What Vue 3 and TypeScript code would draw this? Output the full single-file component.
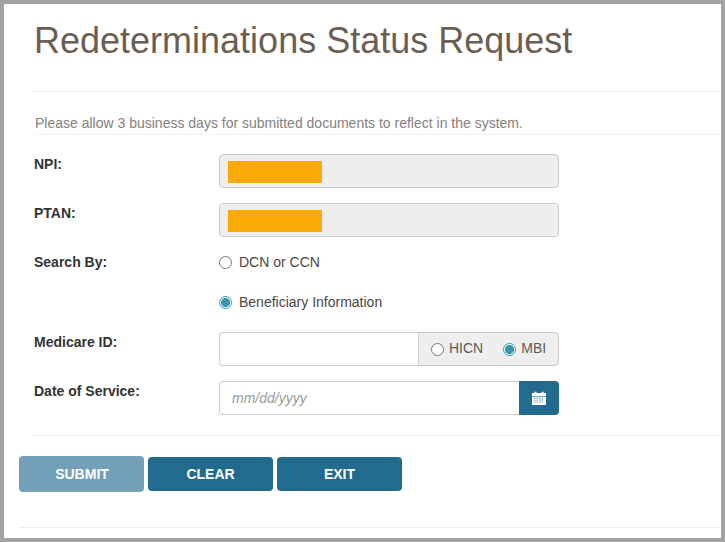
<script setup lang="ts">
const dots: { x: number; y: number }[] = []
for (const y of [6.5, 8.5, 10.5]) {
  for (const x of [2, 4.5, 7, 9.5]) dots.push({ x, y })
}
</script>

<template>
  <div class="frame">
    <h1 class="title">Redeterminations Status Request</h1>
    <hr class="rule first" />
    <p class="note">Please allow 3 business days for submitted documents to reflect in the system.</p>
    <hr class="rule second" />
    <form class="form" @submit.prevent>
      <div class="row">
        <label class="label">NPI:</label>
        <div class="readonly"><span class="redact"></span></div>
      </div>
      <div class="row">
        <label class="label">PTAN:</label>
        <div class="readonly"><span class="redact"></span></div>
      </div>
      <div class="row radio-row">
        <label class="label">Search By:</label>
        <label class="choice"><input class="radio" type="radio" name="by" />DCN or CCN</label>
      </div>
      <div class="row radio-row second-radio">
        <span class="label"></span>
        <label class="choice"><input class="radio" type="radio" name="by" checked />Beneficiary Information</label>
      </div>
      <div class="row">
        <label class="label">Medicare ID:</label>
        <div class="group">
          <input class="field" type="text" />
          <div class="addon">
            <label class="mini"><input class="radio" type="radio" name="idt" />HICN</label>
            <label class="mini"><input class="radio" type="radio" name="idt" checked />MBI</label>
          </div>
        </div>
      </div>
      <div class="row">
        <label class="label">Date of Service:</label>
        <div class="group">
          <input class="field date" type="text" placeholder="mm/dd/yyyy" />
          <button class="cal" type="button" aria-label="Open calendar">
            <svg width="14" height="14" viewBox="0 0 14 14">
              <path d="M0 2h2.5V0.8h2V2h5V0.8h2V2H14v3H0z" fill="#fff" />
              <path d="M0 5.6h14V14H0z" fill="#fff" />
              <rect v-for="(d, i) in dots" :key="i" :x="d.x" :y="d.y" width="1.6" height="1.2" fill="#8aa8c0" />
            </svg>
          </button>
        </div>
      </div>
    </form>
    <hr class="rule third" />
    <div class="actions">
      <button class="btn disabled" type="button">SUBMIT</button>
      <button class="btn" type="button">CLEAR</button>
      <button class="btn" type="button">EXIT</button>
    </div>
    <hr class="rule last" />
  </div>
</template>

<style>
html, body { margin: 0; padding: 0; background: #fff; }
</style>

<style scoped>
.frame {
  box-sizing: border-box;
  width: 725px;
  height: 542px;
  border: 4px solid #a3a3a3;
  background: #fff;
  overflow: hidden;
  font-family: "Liberation Sans", Arial, sans-serif;
  font-size: 14px;
  color: #333;
}
.title {
  margin: 14px 0 0 30px;
  font-size: 36px;
  line-height: 45px;
  font-weight: 400;
  color: #6b5e52;
}
.rule {
  border: 0;
  border-top: 1px solid #eee;
  margin: 0;
}
.first { margin: 28px 0 0 30px; }
.note {
  margin: 21px 0 0 31px;
  font-size: 14px;
  line-height: 20px;
  color: #85807c;
}
.second { margin: 1px 0 0 30px; border-color: #f3f3f3; }
.form {
  display: flex;
  flex-direction: column;
  gap: 15px;
  margin: 19px 0 0 30px;
}
.row {
  display: flex;
  align-items: flex-start;
}
.label {
  width: 185px;
  flex: none;
  font-weight: 700;
  line-height: 20px;
  color: #333;
}
.readonly {
  box-sizing: border-box;
  width: 340px;
  height: 34px;
  display: flex;
  align-items: center;
  padding: 2px 0 0 8px;
  background: #eee;
  border: 1px solid #ccc;
  border-radius: 4px;
}
.redact {
  width: 94px;
  height: 22px;
  background: #f9aa06;
}
.radio-row { margin-top: -7px; height: 34px; align-items: center; }
.radio-row .label { align-self: center; }
.second-radio { margin-top: -7px; height: 30px; }
.choice {
  display: flex;
  align-items: center;
  line-height: 20px;
  color: #4a4644;
}
.radio {
  appearance: none;
  box-sizing: border-box;
  width: 13px;
  height: 13px;
  margin: 0 7px 0 0;
  border: 1px solid #777;
  border-radius: 50%;
  background: #fff;
  flex: none;
}
.radio:checked {
  border-color: #3a94ad;
  background: radial-gradient(circle, #3a94ad 0 4.2px, #fff 4.8px);
}
.group {
  width: 340px;
  height: 34px;
  display: flex;
}
.field {
  box-sizing: border-box;
  flex: 1;
  min-width: 0;
  height: 34px;
  border: 1px solid #ccc;
  border-right: 0;
  border-radius: 4px 0 0 4px;
  outline: 0;
  padding: 0 12px;
  font: inherit;
  background: #fff;
}
.date::placeholder { color: #999; font-style: italic; opacity: 1; }
.date { font-style: italic; }
.addon {
  box-sizing: border-box;
  width: 141px;
  flex: none;
  display: flex;
  align-items: center;
  gap: 20px;
  padding-left: 12px;
  background: #eee;
  border: 1px solid #ccc;
  border-radius: 0 4px 4px 0;
}
.mini {
  display: flex;
  align-items: center;
  padding-bottom: 2px;
  color: #5c5a58;
}
.mini .radio { margin: 2px 5px 0 0; }
.cal {
  width: 40px;
  flex: none;
  display: flex;
  align-items: center;
  justify-content: center;
  padding: 0;
  border: 0;
  border-radius: 0 4px 4px 0;
  background: #236a8f;
}
.third { margin: 20px 0 0 30px; }
.actions {
  display: flex;
  align-items: center;
  gap: 4px;
  margin: 20px 0 0 15px;
}
.btn {
  box-sizing: border-box;
  width: 125px;
  height: 34px;
  border: 0;
  border-radius: 4px;
  background: #236a8f;
  color: #fff;
  font: 700 14px/20px "Liberation Sans", Arial, sans-serif;
}
.disabled {
  height: 36px;
  padding: 1px 0 0 1px;
  background: #739fb8;
  border-bottom: 1px solid #74adbd;
}
.last { margin: 35px 0 0 15px; }
</style>
